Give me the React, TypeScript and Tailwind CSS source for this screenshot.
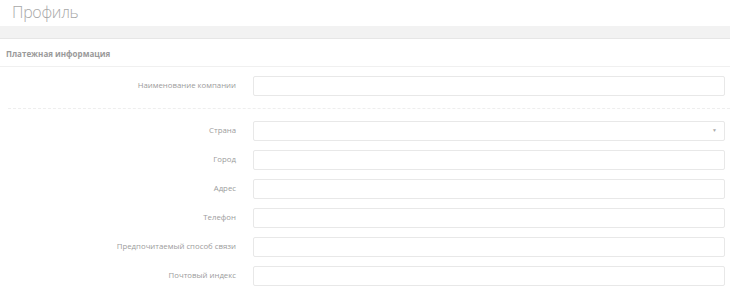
import React from 'react';

const fields = ['Страна', 'Город', 'Адрес', 'Телефон', 'Предпочитаемый способ связи', 'Почтовый индекс'];

function Row({ label, select }: { label: string; select?: boolean }) {
  return (
    <div className="flex items-center h-[20px]">
      <label className="w-[237px] pr-[1px] text-right text-[7.8px] text-[#9c9c9c]">{label}</label>
      <div className="ml-[16px] w-[472px] h-[20px] border border-[#e8e8e8] rounded-[2px] bg-white flex items-center justify-end pr-[7px]">
        {select && <span className="text-[5px] text-[#aaa]">▼</span>}
      </div>
    </div>
  );
}

export default function App() {
  return (
    <div className="w-[730px] h-[294px] bg-white overflow-hidden" style={{ fontFamily: '"Open Sans", sans-serif' }}>
      {/* Page title */}
      <div className="h-[26px] pl-[12px] pt-[2px]">
        <h1 className="text-[16px] font-light leading-[20px] tracking-[-0.3px] text-[#a8a8a8]">Профиль</h1>
      </div>
      <div className="h-[13px] bg-[#f2f2f2] border-b border-[#e6e6e6]" />

      {/* Billing section */}
      <div className="h-[28px] flex items-center pl-[6px] pt-[2px] border-b border-[#f0f0f0]">
        <span className="text-[8px] font-bold text-[#9a9a9a]">Платежная информация</span>
      </div>

      <div className="pt-[9px]">
        <Row label="Наименование компании" />
      </div>
      <div className="mt-[12px] ml-[8px] border-t border-dashed border-[#eeeeee]" />

      <div className="pt-[12px] flex flex-col gap-[9px]">
        {fields.map((f, i) => (
          <Row key={f} label={f} select={i === 0} />
        ))}
      </div>
    </div>
  );
}
